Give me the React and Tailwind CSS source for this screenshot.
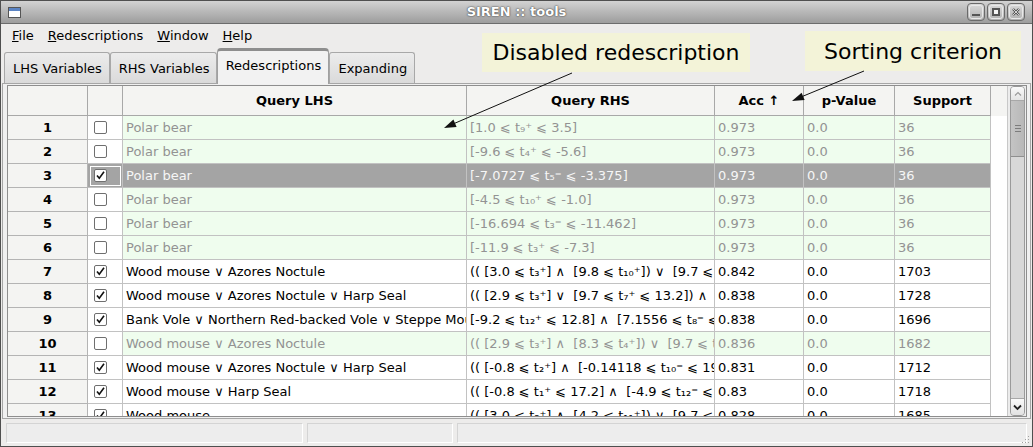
import React from 'react';

const rows = [
  { n: 1, on: false, lhs: 'Polar bear', rhs: '[1.0 ⩽ t₉⁺ ⩽ 3.5]', acc: '0.973', pv: '0.0', sup: '36' },
  { n: 2, on: false, lhs: 'Polar bear', rhs: '[-9.6 ⩽ t₄⁺ ⩽ -5.6]', acc: '0.973', pv: '0.0', sup: '36' },
  { n: 3, on: true, sel: true, lhs: 'Polar bear', rhs: '[-7.0727 ⩽ t₅⁼ ⩽ -3.375]', acc: '0.973', pv: '0.0', sup: '36' },
  { n: 4, on: false, lhs: 'Polar bear', rhs: '[-4.5 ⩽ t₁₀⁺ ⩽ -1.0]', acc: '0.973', pv: '0.0', sup: '36' },
  { n: 5, on: false, lhs: 'Polar bear', rhs: '[-16.694 ⩽ t₃⁼ ⩽ -11.462]', acc: '0.973', pv: '0.0', sup: '36' },
  { n: 6, on: false, lhs: 'Polar bear', rhs: '[-11.9 ⩽ t₃⁺ ⩽ -7.3]', acc: '0.973', pv: '0.0', sup: '36' },
  { n: 7, on: true, lhs: 'Wood mouse ∨ Azores Noctule', rhs: '(( [3.0 ⩽ t₃⁺] ∧  [9.8 ⩽ t₁₀⁺]) ∨  [9.7 ⩽ t₇⁺ ⩽ 13.2]', acc: '0.842', pv: '0.0', sup: '1703' },
  { n: 8, on: true, lhs: 'Wood mouse ∨ Azores Noctule ∨ Harp Seal', rhs: '(( [2.9 ⩽ t₃⁺] ∨  [9.7 ⩽ t₇⁺ ⩽ 13.2]) ∧  [8.3 ⩽ t₄⁺]', acc: '0.838', pv: '0.0', sup: '1728' },
  { n: 9, on: true, lhs: 'Bank Vole ∨ Northern Red-backed Vole ∨ Steppe Mouse', rhs: '[-9.2 ⩽ t₁₂⁺ ⩽ 12.8] ∧  [7.1556 ⩽ t₈⁼ ⩽ 19.3]', acc: '0.838', pv: '0.0', sup: '1696' },
  { n: 10, on: false, lhs: 'Wood mouse ∨ Azores Noctule', rhs: '(( [2.9 ⩽ t₃⁺] ∧  [8.3 ⩽ t₄⁺]) ∨  [9.7 ⩽ t₇⁺ ⩽ 13.2]', acc: '0.836', pv: '0.0', sup: '1682' },
  { n: 11, on: true, lhs: 'Wood mouse ∨ Azores Noctule ∨ Harp Seal', rhs: '(( [-0.8 ⩽ t₂⁺] ∧  [-0.14118 ⩽ t₁₀⁼ ⩽ 19.6]', acc: '0.831', pv: '0.0', sup: '1712' },
  { n: 12, on: true, lhs: 'Wood mouse ∨ Harp Seal', rhs: '(( [-0.8 ⩽ t₁⁺ ⩽ 17.2] ∧  [-4.9 ⩽ t₁₂⁼ ⩽ 3.1]', acc: '0.83', pv: '0.0', sup: '1718' },
  { n: 13, on: true, lhs: 'Wood mouse', rhs: '(( [3.0 ⩽ t₃⁺] ∧  [4.2 ⩽ t₁₁⁺]) ∨  [9.7 ⩽ t₇⁺ ⩽ 13.2]', acc: '0.828', pv: '0.0', sup: '1685' },
];

function CheckBox({ checked }) {
  return (
    <span className="w-[13px] h-[13px] border border-[#6f6f6f] bg-white rounded-[2px] flex items-center justify-center">
      {checked && (
        <svg width="11" height="11" viewBox="0 0 11 11">
          <path d="M2 5.5 L4.3 8.3 L9 1.8" fill="none" stroke="#111" strokeWidth="1.6" />
        </svg>
      )}
    </span>
  );
}

function WinButton({ children }) {
  return (
    <div className="w-[18px] h-[18px] rounded-[4px] border border-[#6a6a6a] bg-gradient-to-b from-[#d9d9d9] to-[#b0b0b0] flex items-center justify-center">
      <div className="w-[14px] h-[14px] rounded-[3px] border border-[#e8e8e8] flex items-center justify-center">
        {children}
      </div>
    </div>
  );
}

function Tab({ label, active }) {
  if (active) {
    return (
      <div className="h-[36px] w-[112px] -mb-px z-10 bg-[#f2f2f2] border border-[#a0a0a0] border-b-0 border-t-[3px] border-t-[#8e8e8e] rounded-t-[4px] flex items-center justify-center pb-[3px] text-[13px] text-black">
        {label}
      </div>
    );
  }
  return (
    <div className="h-[31px] pl-[8px] pr-[7px] bg-gradient-to-b from-[#ececec] to-[#dadada] border border-[#a8a8a8] border-b-0 rounded-t-[3px] flex items-center justify-center pt-[2px] text-[13px] text-black">
      {label}
    </div>
  );
}

export default function App() {
  const cols = 'grid grid-cols-[80px_35px_344px_248px_89px_91px_96px]';
  return (
    <div className="relative w-[1033px] h-[447px] overflow-hidden bg-[#edeceb] border border-[#4f4f4f] flex flex-col font-['DejaVu_Sans',sans-serif] text-[13px]">
      {/* title bar */}
      <div className="h-[23px] shrink-0 bg-gradient-to-b from-[#d2d2d2] to-[#9d9d9d] border-b border-[#6c6c6c] flex items-center px-[7px] relative">
        <div className="w-[13px] h-[11px] border border-[#555] bg-white flex flex-col">
          <div className="h-[3px] bg-[#5b84c4]" />
        </div>
        <div className="absolute left-0 right-0 top-0 h-full flex items-center justify-center font-bold text-white text-[13px] pointer-events-none [text-shadow:0_0_2px_#444,0_0_1px_#444]">
          SIREN :: tools
        </div>
        <div className="ml-auto flex gap-[2px]">
          <WinButton>
            <div className="w-[8px] h-[2px] bg-[#f4f4f4] border border-[#555] mt-[6px]" />
          </WinButton>
          <WinButton>
            <div className="w-[8px] h-[8px] border-2 border-[#555] bg-[#f4f4f4]" />
          </WinButton>
          <WinButton>
            <svg width="10" height="10" viewBox="0 0 10 10">
              <path d="M2 2 L8 8 M8 2 L2 8" stroke="#555" strokeWidth="2.4" />
              <path d="M2 2 L8 8 M8 2 L2 8" stroke="#f4f4f4" strokeWidth="0.8" />
            </svg>
          </WinButton>
        </div>
      </div>

      {/* menu bar */}
      <div className="h-[22px] shrink-0 flex items-center pl-[11px] gap-[14px] text-[13px] text-black pt-[2px]">
        <span><span className="underline">F</span>ile</span>
        <span><span className="underline">R</span>edescriptions</span>
        <span><span className="underline">W</span>indow</span>
        <span><span className="underline">H</span>elp</span>
      </div>

      {/* tabs */}
      <div className="h-[37px] shrink-0 flex items-end pl-[3px]">
        <Tab label="LHS Variables" />
        <Tab label="RHS Variables" />
        <Tab label="Redescriptions" active />
        <Tab label="Expanding" />
      </div>

      {/* tab pane */}
      <div className="h-[336px] shrink-0 mx-[1px] border border-[#a6a6a6] bg-[#f0f0f0] pl-[4px] pr-[3px] pt-[1px] pb-[1px]">
        <div className="h-full border border-[#8e8e8e] bg-white flex">
          <div className="flex-1 overflow-hidden">
            <div className="flex bg-[#f4f4f2]">
              <div className={`${cols} h-[30px] font-bold text-black`}>
                <div className="border-r border-b border-[#a8a8a8]" />
                <div className="border-r border-b border-[#a8a8a8]" />
                <div className="border-r border-b border-[#a8a8a8] flex items-center justify-center">Query LHS</div>
                <div className="border-r border-b border-[#a8a8a8] flex items-center justify-center">Query RHS</div>
                <div className="border-r border-b border-[#a8a8a8] flex items-center justify-center">Acc ↑</div>
                <div className="border-r border-b border-[#a8a8a8] flex items-center justify-center">p-Value</div>
                <div className="border-r border-b border-[#a8a8a8] flex items-center justify-center">Support</div>
              </div>
            </div>
            {rows.map((r) => {
              const tone = r.sel
                ? 'bg-[#a4a4a4] text-[#f6f6f6]'
                : r.on
                ? 'bg-white text-black'
                : 'bg-[#effdee] text-[#939393]';
              const cell = `border-r border-b border-[#c2c2c2] pl-[3px] flex items-center whitespace-pre overflow-hidden ${tone}`;
              return (
                <div key={r.n} className={`${cols} h-[24px]`}>
                  <div className="bg-[#f4f4f2] border-r border-b border-[#b4b4b4] flex items-center justify-center font-bold text-black">
                    {r.n}
                  </div>
                  <div className={`border-r border-b border-[#c2c2c2] flex items-center ${r.sel ? 'bg-[#a4a4a4] pl-[2px]' : 'bg-white pl-[5px]'}`}>
                    {r.sel ? (
                      <div className="w-[31px] h-[20px] border border-white flex items-center pl-[3px]">
                        <CheckBox checked />
                      </div>
                    ) : (
                      <div className="pl-[1px]"><CheckBox checked={r.on} /></div>
                    )}
                  </div>
                  <div className={cell}>{r.lhs}</div>
                  <div className={cell}>{r.rhs}</div>
                  <div className={cell}>{r.acc}</div>
                  <div className={cell}>{r.pv}</div>
                  <div className={cell}>{r.sup}</div>
                </div>
              );
            })}
          </div>
          {/* scrollbar */}
          <div className="w-[19px] shrink-0 bg-[#ececec] border-l border-[#c8c8c8] pl-[2px] pr-[1px]">
            <div className="h-full rounded-[4px] border border-[#9a9a9a] bg-[#d8d8d8] flex flex-col overflow-hidden">
              <div className="h-[14px] bg-gradient-to-b from-[#fafafa] to-[#e4e4e4] border-b border-[#a8a8a8] flex items-center justify-center">
                <svg width="8" height="6" viewBox="0 0 8 6">
                  <path d="M1 4.5 L4 1.5 L7 4.5" fill="none" stroke="#9a9a9a" strokeWidth="1.2" />
                </svg>
              </div>
              <div className="h-[56px] bg-gradient-to-r from-[#c4c4c4] to-[#b8b8b8] border-b border-[#8f8f8f] flex items-center justify-center">
                <div className="flex flex-col gap-[2px]">
                  <div className="w-[6px] h-px bg-[#7c7c7c]" />
                  <div className="w-[6px] h-px bg-[#7c7c7c]" />
                  <div className="w-[6px] h-px bg-[#7c7c7c]" />
                </div>
              </div>
              <div className="flex-1" />
              <div className="h-[17px] bg-gradient-to-b from-[#fafafa] to-[#e2e2e2] border-t border-[#a8a8a8] flex items-center justify-center">
                <svg width="9" height="7" viewBox="0 0 9 7">
                  <path d="M1 1.5 L4.5 5 L8 1.5" fill="none" stroke="#222" strokeWidth="1.8" />
                </svg>
              </div>
            </div>
          </div>
        </div>
      </div>

      {/* status bar */}
      <div className="flex-1 flex items-center gap-[4px] pl-[5px] pr-[5px] pt-[1px] relative">
        <div className="w-[297px] h-[20px] border border-[#d4d4d4] border-b-white border-r-white bg-[#ededed]" />
        <div className="w-[146px] h-[20px] border border-[#d4d4d4] border-b-white border-r-white bg-[#ededed]" />
        <div className="flex-1 h-[20px] border border-[#d4d4d4] border-b-white border-r-white bg-[#ededed]" />
        <svg className="absolute right-[2px] bottom-[2px]" width="10" height="10" viewBox="0 0 10 10">
          <g fill="#a0a0a0">
            <rect x="8" y="2" width="1" height="1" />
            <rect x="5" y="5" width="1" height="1" />
            <rect x="8" y="5" width="1" height="1" />
            <rect x="2" y="8" width="1" height="1" />
            <rect x="5" y="8" width="1" height="1" />
            <rect x="8" y="8" width="1" height="1" />
          </g>
        </svg>
      </div>

      {/* callouts */}
      <div className="absolute left-[481px] top-[32px] w-[268px] h-[39px] bg-[#f3f3d8] flex items-center justify-center text-[22px] text-black">
        Disabled redescription
      </div>
      <div className="absolute left-[804px] top-[30px] w-[216px] h-[40px] bg-[#f3f3d8] flex items-center justify-center text-[22px] text-black">
        Sorting criterion
      </div>
      <svg className="absolute left-0 top-0 pointer-events-none" width="1033" height="447" viewBox="0 0 1033 447">
        <line x1="571" y1="72" x2="452" y2="123" stroke="#111" strokeWidth="1" />
        <polygon points="443,127 455.6,126 452.4,118.6" fill="#111" />
        <line x1="863" y1="70" x2="800" y2="96" stroke="#111" strokeWidth="1" />
        <polygon points="791,100 803.6,99.1 800.6,91.7" fill="#111" />
      </svg>
    </div>
  );
}
